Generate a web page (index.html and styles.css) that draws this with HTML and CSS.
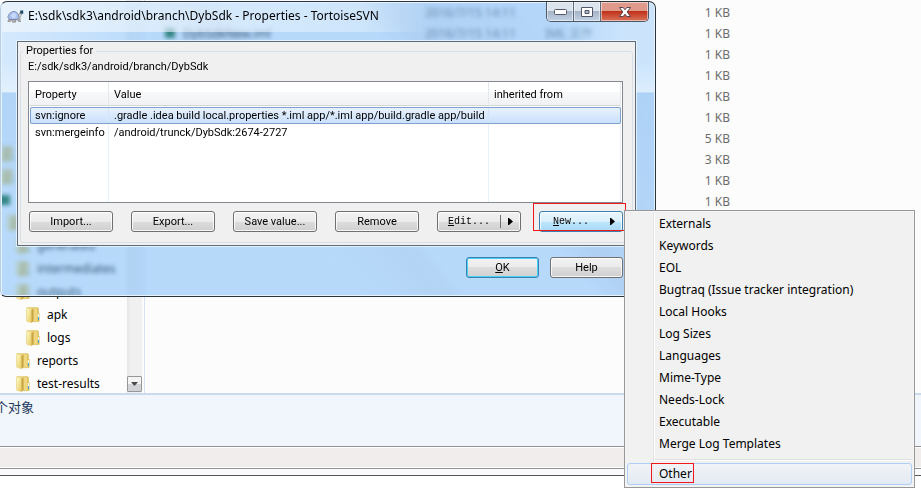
FILE: index.html
```html
<!DOCTYPE html>
<html lang="en">
<head>
<meta charset="utf-8">
<title>Properties - TortoiseSVN</title>
<link rel="stylesheet" href="styles.css">
</head>
<body>
<svg class="defs" aria-hidden="true">
  <defs>
    <linearGradient id="fold-back" x1="0" x2="1" y1="0" y2="0">
      <stop offset="0" stop-color="#f6e8a2"/><stop offset="1" stop-color="#d9b84a"/>
    </linearGradient>
    <linearGradient id="fold-front" x1="0" x2="1" y1="0" y2="1">
      <stop offset="0" stop-color="#fffbc8"/><stop offset="1" stop-color="#e8cb60"/>
    </linearGradient>
    <symbol id="folder" viewBox="0 0 14 16">
      <path d="M1 .6h10.600l.9.900v4l.7.800v8l-1.200.400H5L1 13.500z" fill="url(#fold-back)" stroke="#dcc164" stroke-width=".6"/>
      <path d="M.5 1l4.500.8.600 14L.7 14.200z" fill="url(#fold-front)" stroke="#e5cf7d" stroke-width=".5"/>
      <path d="M5.500 3l2-1.500v12.500l-2 1.800z" fill="#c9a544"/>
      <path d="M8 1.300h3.300v13H8z" fill="#eed780"/>
      <path d="M11.800 7h1.200v3h-1.200z" fill="#f4f8f4"/>
      <path d="M12 10h1v3h-1z" fill="#46a3e0"/>
    </symbol>
  </defs>
</svg>

<main class="explorer">
  <div class="panes">
    <nav class="tree">
      <ul>
        <li class="depth-0"><svg class="folder"><use href="#folder"/></svg></li>
        <li class="depth-0"><svg class="folder"><use href="#folder"/></svg></li>
        <li class="depth-0"><span class="module"></span></li>
        <li class="depth-1"><svg class="folder"><use href="#folder"/></svg></li>
        <li class="depth-2"><svg class="folder"><use href="#folder"/></svg>generated</li>
        <li class="depth-2"><svg class="folder"><use href="#folder"/></svg>intermediates</li>
        <li class="depth-2"><svg class="folder"><use href="#folder"/></svg>outputs</li>
        <li class="depth-3"><svg class="folder"><use href="#folder"/></svg>apk</li>
        <li class="depth-3"><svg class="folder"><use href="#folder"/></svg>logs</li>
        <li class="depth-2"><svg class="folder"><use href="#folder"/></svg>reports</li>
        <li class="depth-2"><svg class="folder"><use href="#folder"/></svg>test-results</li>
      </ul>
    </nav>
    <div class="scrollbar">
      <button class="scroll-down" aria-label="Scroll down"><svg viewBox="0 0 7 4"><path d="M0 0h7L3.500 4z" fill="#4a4a4a"/></svg></button>
    </div>
    <div class="files">
      <table>
        <colgroup><col class="c-name"><col class="c-date"><col class="c-type"><col class="c-size"><col></colgroup>
        <tbody>
          <tr><td></td><td>2016/7/15 14:11</td><td></td><td>1 KB</td><td></td></tr>
          <tr><td><span class="module"></span>DybSdkNew.iml</td><td>2016/7/15 14:11</td><td>IML 文件</td><td>1 KB</td><td></td></tr>
          <tr><td></td><td></td><td></td><td>1 KB</td><td></td></tr>
          <tr><td></td><td></td><td></td><td>1 KB</td><td></td></tr>
          <tr><td></td><td></td><td></td><td>1 KB</td><td></td></tr>
          <tr><td></td><td></td><td></td><td>1 KB</td><td></td></tr>
          <tr><td></td><td></td><td></td><td>5 KB</td><td></td></tr>
          <tr><td></td><td></td><td></td><td>3 KB</td><td></td></tr>
          <tr><td></td><td></td><td></td><td>1 KB</td><td></td></tr>
          <tr><td></td><td></td><td></td><td>1 KB</td><td></td></tr>
        </tbody>
      </table>
    </div>
  </div>
  <div class="details" lang="zh">个对象</div>
  <div class="status"></div>
  <div class="frame-edge"></div>
</main>

<section class="dialog" role="dialog" aria-labelledby="dialog-title">
  <header class="titlebar">
    <svg class="turtle" viewBox="0 0 17 14">
      <path d="M2 10L.8 12.500h2.500L5 11zM6 10.500l-.5 2.700h3l.5-2.500zM10 10l1.500 2.500h2L12.500 9z" fill="#b9b4ac" stroke="#77757a" stroke-width=".6"/>
      <path d="M10.500 8.500L13 3.500l2-1 .8 1.800-1.300 1.200-2 5z" fill="#d6d2ca" stroke="#85838a" stroke-width=".6"/>
      <path d="M.8 8.500C1.500 4.500 4 2.500 7 2.500s4.500 2.500 5 6L10 10.500H3z" fill="#a9c0ee" stroke="#7480a8" stroke-width=".8"/>
      <path d="M4 6l3-2.500L9.500 6 8 9H5z" fill="#c8d8fa"/>
      <path d="M13.200 1.500h3v3.200h-3z" fill="#1d4964"/>
    </svg>
    <h1 id="dialog-title">E:\sdk\sdk3\android\branch\DybSdk - Properties - TortoiseSVN</h1>
    <div class="controls">
      <button class="win" aria-label="Minimize"><svg viewBox="0 0 13 6"><rect x=".5" y=".5" width="12" height="5" rx="1" fill="#fff" stroke="#535666"/></svg></button>
      <button class="win" aria-label="Maximize"><svg class="max" viewBox="0 0 12 10"><path d="M.5.5h11v9H.5zM4 3.500v3h4v-3z" fill="#fff" fill-rule="evenodd" stroke="#535666"/></svg></button>
      <button class="win close" aria-label="Close"><svg class="x" viewBox="0 0 12 10"><path d="M.5.5h3.700L6 2.800 7.800.5h3.700L8.200 5l3.300 4.500H7.800L6 7.200 4.200 9.500H.5L3.800 5z" fill="#fff" stroke="#5a4650"/></svg></button>
    </div>
  </header>

  <div class="client">
    <fieldset class="group">
      <legend>Properties for</legend>
      <p class="path">E:/sdk/sdk3/android/branch/DybSdk</p>
      <div class="grid-box">
        <table class="props">
          <colgroup><col class="p-name"><col class="p-value"><col></colgroup>
          <thead><tr><th>Property</th><th>Value</th><th>inherited from</th></tr></thead>
          <tbody>
            <tr class="selected"><td>svn:ignore</td><td>.gradle .idea build local.properties *.iml app/*.iml app/build.gradle app/build</td><td></td></tr>
            <tr><td>svn:mergeinfo</td><td>/android/trunck/DybSdk:2674-2727</td><td></td></tr>
            <tr class="rest"><td></td><td></td><td></td></tr>
          </tbody>
        </table>
      </div>
      <div class="actions">
        <button class="btn">Import...</button>
        <button class="btn">Export...</button>
        <button class="btn">Save value...</button>
        <button class="btn">Remove</button>
        <button class="btn split"><span class="label"><u>E</u>dit...</span><span class="drop"><svg viewBox="0 0 5 7"><path d="M0 0h1l4 3.500L1 7H0z"/></svg></span></button>
        <div class="new-wrap">
          <button class="btn split hot" aria-haspopup="menu"><span class="label"><u>N</u>ew...</span><span class="drop"><svg viewBox="0 0 5 7"><path d="M0 0h1l4 3.500L1 7H0z"/></svg></span></button>
          <span class="mark mark-new"></span>
          <div class="menu" role="menu">
            <button role="menuitem">Externals</button>
            <button role="menuitem">Keywords</button>
            <button role="menuitem">EOL</button>
            <button role="menuitem">Bugtraq (Issue tracker integration)</button>
            <button role="menuitem">Local Hooks</button>
            <button role="menuitem">Log Sizes</button>
            <button role="menuitem">Languages</button>
            <button role="menuitem">Mime-Type</button>
            <button role="menuitem">Needs-Lock</button>
            <button role="menuitem">Executable</button>
            <button role="menuitem">Merge Log Templates</button>
            <hr>
            <button role="menuitem" class="current">Other<span class="mark mark-other"></span></button>
          </div>
        </div>
      </div>
    </fieldset>
  </div>

  <footer class="buttons">
    <button class="btn default"><span><u>O</u>K</span></button>
    <button class="btn">Help</button>
  </footer>
</section>
</body>
</html>
```
FILE: styles.css
```css
* { box-sizing: border-box; }

body {
  margin: 0;
  background: #fff;
  color: #000;
  font: 12px/16px "Noto Sans", "Noto Sans CJK SC", sans-serif;
}

button { font: inherit; color: inherit; margin: 0; padding: 0; }
ul { list-style: none; margin: 0; padding: 0; }
.defs { position: absolute; width: 0; height: 0; }

/* Explorer window */
.explorer {
  display: grid;
  grid-template-rows: minmax(0, 1fr) 53px 23px 7px;
  height: 100vh;
  padding-bottom: 28px;
}

.panes { display: flex; background: #fcfcfc; overflow: hidden; }

.tree {
  flex: 0 0 127px;
  display: flex;
  flex-direction: column;
  justify-content: flex-end;
}
.tree ul { margin-bottom: -2px; }
.tree li { display: flex; align-items: center; gap: 7px; height: 23px; white-space: nowrap; }
.depth-0 { padding-left: 0; }
.depth-1 { padding-left: 7px; }
.depth-2 { padding-left: 16px; }
.depth-3 { padding-left: 26px; }
.folder { width: 14px; height: 16px; }
.module { display: inline-block; width: 10px; height: 10px; background: #005c1c; }

.scrollbar {
  flex: 0 0 18px;
  display: flex;
  align-items: flex-end;
  background: linear-gradient(90deg, #e6e6e6, #f0f0f0 4px, #f0f0f0 15px, #fcfcfc 15px);
  border-right: 1px solid #d5e2f3;
}
.scroll-down {
  width: 15px;
  height: 16px;
  margin-bottom: 1px;
  border: 1px solid #979797;
  border-radius: 1px;
  background: linear-gradient(#f4f4f4 50%, #d2d3d6 50%);
  display: grid;
  place-items: center;
}
.scroll-down svg { width: 7px; height: 4px; }

.files { flex: 1; padding-top: 2px; color: #6d6d6d; }
.files table { width: 100%; table-layout: fixed; border-collapse: collapse; }
.files td { height: 21px; padding: 0; white-space: nowrap; }
.files .module { margin: 0 8px 0 20px; }
.c-name { width: 280px; }
.c-date { width: 120px; }
.c-type { width: 100px; }
.c-size { width: 85px; }
.files td:nth-child(1) { color: #000; }
.files td:nth-child(4) { text-align: right; }

.details {
  padding-top: 3px;
  text-indent: -5px;
  border-top: 2px solid #cbd9ec;
  background: #f1f5fc;
  color: #1e395b;
  font: 13px/18px "Noto Sans CJK SC", sans-serif;
}
.status { border: solid #8f9193; border-width: 1px 0; background: #f1edec; box-shadow: inset 0 1px #fff, inset 0 -1px #fff; }
.frame-edge { border-bottom: 1px solid #55565a; background: #fafbfd; }

/* Properties dialog */
.dialog {
  position: absolute;
  top: 1px;
  left: 0;
  width: 656px;
  padding: 0 19px 18px 16px;
  border: 1px solid #2a3440;
  border-left-color: #b9cfe6;
  border-radius: 7px 7px 6px 6px;
  box-shadow: inset 0 0 0 1px #e6f3ff;
  background:
    linear-gradient(90deg, rgba(240, 246, 252, .7), rgba(228, 241, 252, .5) 360px, rgba(200, 225, 250, 0) 430px) 0 0 / 100% 30px no-repeat,
    linear-gradient(90deg, rgba(236, 245, 254, .55), transparent 160px) 0 0 / 100% 90px no-repeat,
    linear-gradient(90deg, transparent 560px, rgba(225, 240, 254, .5) 620px) 0 0 / 100% 90px no-repeat,
    linear-gradient(transparent 60px, rgba(240, 247, 254, .6) 90px, rgba(140, 180, 220, .15) 91px, transparent 200px),
    linear-gradient(50deg, rgba(108, 180, 250, .48) 40%, rgba(108, 172, 238, .5) 50%, rgba(108, 180, 250, .48) 52%, rgba(108, 180, 250, .48) 66%, rgba(104, 168, 236, .52) 70%, rgba(108, 178, 248, .5) 90%);
  backdrop-filter: blur(2px);
}

.titlebar { display: flex; align-items: flex-start; height: 39px; margin: 0 -13px 0 -10px; }
.turtle { width: 17px; height: 14px; margin: 7px 4px 0 0; }
.titlebar h1 { flex: 1; margin: 5px 0 0; font-size: 12px; font-weight: 400; line-height: 18px; white-space: nowrap; }
.controls { display: flex; border: 1px solid #4d5866; border-top: 0; border-radius: 0 0 5px 5px; overflow: hidden; }
.win {
  width: 27px;
  height: 19px;
  border: 0;
  border-right: 1px solid #5f6b7a;
  background: linear-gradient(#dbe3ec 45%, #a5b4c6 50%, #c2d2e4);
  box-shadow: inset 0 0 0 1px rgba(255, 255, 255, .5);
  display: grid;
  place-items: center;
}
.win svg { width: 13px; height: 6px; }
.win .max, .win .x { width: 12px; height: 10px; }
.win.close { width: 47px; border-right: 0; background: linear-gradient(#e09a8c 45%, #c0321a 50%, #d9745a); }

.client {
  padding: 2px;
  border: 1px solid #5d6b7b;
  background: #f0f0f0;
  box-shadow: 0 0 0 1px rgba(240, 248, 255, .8);
  font: 11px/14px Roboto, "Noto Sans", sans-serif;
}
.group { margin: 0; min-width: 0; padding: 0 9px 10px 7px; border: 1px solid #d5dfe5; border-radius: 3px; }
.group legend { margin-left: -5px; padding: 0 3px; }
.path { margin: 2px 0 7px; }

.grid-box { height: 122px; border: 1px solid #828790; background: #fff; padding: 0 1px; }
.props { width: 100%; height: 120px; table-layout: fixed; border-collapse: separate; border-spacing: 0; }
.p-name { width: 79px; }
.p-value { width: 380px; }
.props th {
  height: 25px;
  padding: 0 0 0 5px;
  text-align: left;
  font-weight: 400;
  border-right: 1px solid #e3e8ee;
  background: linear-gradient(#fff 10px, #f7f8fa 10px, #f1f2f4 23px, #d5d5d5 23px, #d5d5d5 24px, #fff 24px);
}
.props td { height: 17px; padding: 0 0 0 5px; line-height: 15px; white-space: nowrap; border-right: 1px solid #e8f1fb; }
.props .rest td { height: auto; }
.selected { outline: 1px solid #7da2ce; outline-offset: -1px; border-radius: 2px; background: linear-gradient(#eaf3fd, #c8dffc); }
.selected td { border-color: #d3e4f8; }

.actions { display: flex; justify-content: space-between; margin-top: 8px; padding-left: 1px; }
.btn {
  width: 84px;
  height: 21px;
  border: 1px solid #707070;
  border-radius: 3px;
  box-shadow: inset 0 0 0 1px rgba(255, 255, 255, .8);
  background: linear-gradient(#f2f2f2, #ebebeb 50%, #dddddd 50%, #cfcfcf);
  text-align: center;
}
.split { display: flex; align-items: center; font: 10px/14px "Liberation Mono", monospace; }
.split .label { flex: 1; text-align: left; padding-left: 10px; }
.drop { display: grid; place-items: center; width: 20px; height: 13px; border-left: 1px solid #707070; }
.drop svg { width: 5px; height: 7px; }
.hot { border-color: #3c7fb1; background: linear-gradient(#eaf6fd, #d9f0fc 50%, #bee6fd 50%, #a7d9f5); }
.hot .label { padding-left: 13px; }
.hot .drop { border-color: transparent; }

.buttons {
  display: flex;
  justify-content: flex-end;
  gap: 11px;
  padding: 11px 13px 0 0;
  font: 11px/14px Roboto, "Noto Sans", sans-serif;
}
.buttons .btn { width: 73px; }
.default { border-color: #3c7fb1; box-shadow: inset 0 0 0 1px #48d0f5; }

/* Popup menu of the New button */
.new-wrap { position: relative; }
.mark { position: absolute; border: 1px solid #f01818; pointer-events: none; }
.mark-new { left: -6px; top: -8px; width: 93px; height: 28px; }
.mark-other { left: 23px; top: -1px; width: 43px; height: 20px; }

.menu {
  position: absolute;
  left: 85px;
  top: -1px;
  width: 291px;
  padding: 2px;
  border: 1px solid #979797;
  background: linear-gradient(90deg, #f1f1f1 28px, #e2e3e3 28px, #e2e3e3 29px, #fff 29px, #fff 30px, #f1f1f1 30px);
  box-shadow: inset 0 0 0 1px #f5f5f5;
  font: 12px/20px "Noto Sans", sans-serif;
}
.menu button {
  position: relative;
  display: block;
  width: 100%;
  height: 22px;
  padding: 0 0 0 31px;
  border: 1px solid transparent;
  background: none;
  text-align: left;
}
.menu hr { height: 2px; margin: 4px 0 2px 28px; border: 0; border-top: 1px solid #e0e0e0; background: #fff; }
.menu .current { border-color: #aecff7; border-radius: 3px; background: linear-gradient(rgba(240, 244, 250, .6), rgba(224, 232, 244, .8)); }
```
